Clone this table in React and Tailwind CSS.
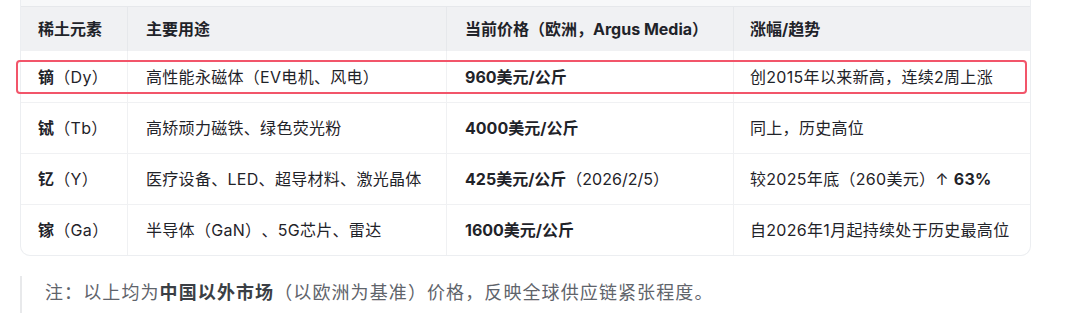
const rows = [
  {
    el: "镝",
    sym: "（Dy）",
    use: "高性能永磁体（EV电机、风电）",
    price: "960美元/公斤",
    priceNote: "",
    trend: <>创2015年以来新高，连续2周上涨</>,
  },
  {
    el: "铽",
    sym: "（Tb）",
    use: "高矫顽力磁铁、绿色荧光粉",
    price: "4000美元/公斤",
    priceNote: "",
    trend: <>同上，历史高位</>,
  },
  {
    el: "钇",
    sym: "（Y）",
    use: "医疗设备、LED、超导材料、激光晶体",
    price: "425美元/公斤",
    priceNote: "（2026/2/5）",
    trend: (
      <>
        较2025年底（260美元）↑ <b className="font-bold">63%</b>
      </>
    ),
  },
  {
    el: "镓",
    sym: "（Ga）",
    use: "半导体（GaN）、5G芯片、雷达",
    price: "1600美元/公斤",
    priceNote: "",
    trend: <>自2026年1月起持续处于历史最高位</>,
  },
];

const cols = "grid grid-cols-[106px_319px_287px_299px]";
const font = { fontFamily: 'Inter, "Noto Sans CJK SC", sans-serif' };

export default function App() {
  return (
    <div
      className="w-[1080px] h-[313px] bg-white overflow-hidden text-[16px] text-[#1f2329] [text-spacing-trim:space-all]"
      style={font}
    >
      <div className="relative ml-[20px] w-[1011px]">
        {/* table */}
        <div className="border-x border-b border-[#eceef1] rounded-b-[10px] overflow-hidden">
          <div className="h-[7px] bg-[#f7f8f9] border-b border-[#e6e8eb]" />
          <div className={`${cols} h-[44px] bg-[#f0f1f3] font-bold`}>
            <div className="flex items-center pl-[17px]">稀土元素</div>
            <div className="flex items-center pl-[18px] border-l border-[#e6e8eb]">主要用途</div>
            <div className="flex items-center pl-[18px] border-l border-[#e6e8eb]">当前价格（欧洲，Argus Media）</div>
            <div className="flex items-center pl-[16px] border-l border-[#e6e8eb]">涨幅/趋势</div>
          </div>
          {rows.map((r, i) => (
            <div
              key={r.el}
              className={`${cols} h-[51px] tracking-[0.3px] ${i > 0 ? "border-t border-[#f0f1f3]" : ""}`}
            >
              <div className="flex items-center pl-[17px]">
                <span className="font-bold">{r.el}</span>
                <span>{r.sym}</span>
              </div>
              <div className="flex items-center pl-[18px] border-l border-[#f0f1f3]">{r.use}</div>
              <div className="flex items-center pl-[18px] border-l border-[#f0f1f3] tracking-normal">
                <span className="font-bold">{r.price}</span>
                {r.priceNote && <span>{r.priceNote}</span>}
              </div>
              <div className="flex items-center pl-[16px] border-l border-[#f0f1f3] whitespace-pre">{r.trend}</div>
            </div>
          ))}
        </div>
        {/* highlight annotation */}
        <div className="absolute left-[-4px] top-[60px] w-[1011px] h-[34px] border-2 border-[#f2556a] rounded-[4px]" />
      </div>

      {/* note */}
      <div className="ml-[20px] mt-[20px] border-l-2 border-[#e8e9eb] h-[40px] flex items-start pt-[3px] pl-[23px] text-[18px] tracking-[1.1px] text-[#5f646b]">
        <span>
          注：以上均为<b className="font-bold text-[#3b3f45]">中国以外市场</b>（以欧洲为基准）价格，反映全球供应链紧张程度。
        </span>
      </div>
    </div>
  );
}
